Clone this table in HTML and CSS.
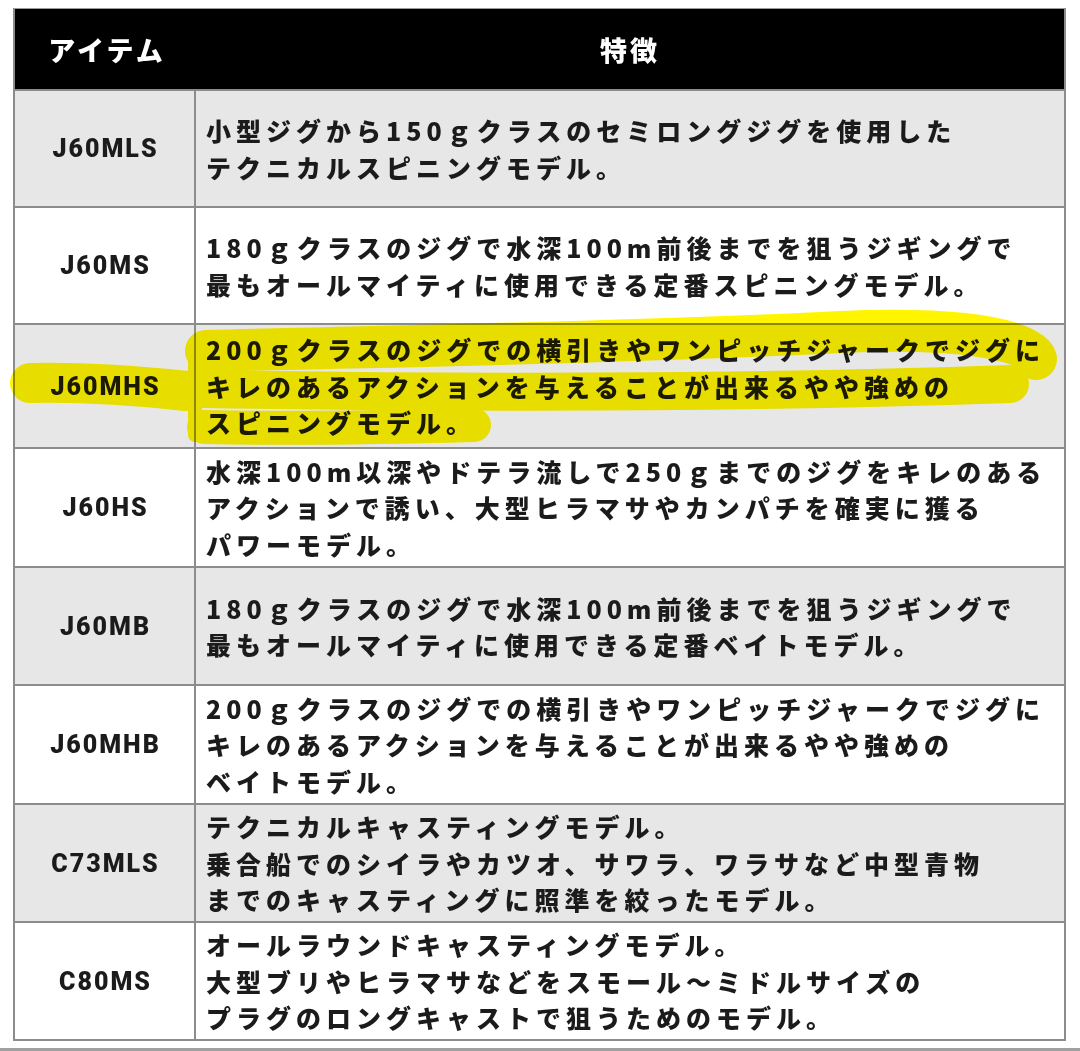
FILE: index.html
```html
<!DOCTYPE html>
<html lang="ja">
<head>
<meta charset="utf-8">
<title>アイテム 特徴</title>
<link rel="stylesheet" href="styles.css">
</head>
<body>
<div class="page">
  <div class="spec">
    <div class="head head-item">アイテム</div>
    <div class="head head-feat">特徴</div>

    <div class="cell name gray r1">J60MLS</div>
    <div class="cell desc gray r1">小型ジグから150ｇクラスのセミロングジグを使用した<br>テクニカルスピニングモデル。</div>

    <div class="cell name r2">J60MS</div>
    <div class="cell desc r2">180ｇクラスのジグで水深100m前後までを狙うジギングで<br>最もオールマイティに使用できる定番スピニングモデル。</div>

    <div class="cell name gray r3">J60MHS</div>
    <div class="cell desc gray r3">200ｇクラスのジグでの横引きやワンピッチジャークでジグに<br>キレのあるアクションを与えることが出来るやや強めの<br>スピニングモデル。</div>

    <div class="cell name r4">J60HS</div>
    <div class="cell desc r4">水深100m以深やドテラ流しで250ｇまでのジグをキレのある<br>アクションで誘い、大型ヒラマサやカンパチを確実に獲る<br>パワーモデル。</div>

    <div class="cell name gray r5">J60MB</div>
    <div class="cell desc gray r5">180ｇクラスのジグで水深100m前後までを狙うジギングで<br>最もオールマイティに使用できる定番ベイトモデル。</div>

    <div class="cell name r6">J60MHB</div>
    <div class="cell desc r6">200ｇクラスのジグでの横引きやワンピッチジャークでジグに<br>キレのあるアクションを与えることが出来るやや強めの<br>ベイトモデル。</div>

    <div class="cell name gray r7">C73MLS</div>
    <div class="cell desc gray r7">テクニカルキャスティングモデル。<br>乗合船でのシイラやカツオ、サワラ、ワラサなど中型青物<br>までのキャスティングに照準を絞ったモデル。</div>

    <div class="cell name r8">C80MS</div>
    <div class="cell desc r8">オールラウンドキャスティングモデル。<br>大型ブリやヒラマサなどをスモール～ミドルサイズの<br>プラグのロングキャストで狙うためのモデル。</div>
  </div>

  <svg class="marker" viewBox="0 0 1080 1051" width="1080" height="1051" aria-hidden="true">
    <g fill="none" stroke="#fff500" stroke-linecap="round" stroke-linejoin="round">
      <path d="M 30 383 C 80 382, 140 386, 186 391" stroke-width="40"/>
      <path d="M 206 351 C 400 346, 650 342, 840 332 C 960 327, 1030 339, 1036 359" stroke-width="42"/>
      <path d="M 204 389 C 450 393, 750 393, 1010 384" stroke-width="38"/>
      <path d="M 204 427 C 300 429, 400 427, 474 425" stroke-width="34"/>
      <path d="M 195 355 L 195 435" stroke-width="14"/>
    </g>
  </svg>
  <div class="bottom-rule"></div>
</div>
</body>
</html>
```

FILE: styles.css
```css
html, body {
  margin: 0;
  padding: 0;
  background: #ffffff;
}

body {
  font-family: "Noto Sans CJK JP", "Noto Sans", sans-serif;
  color: #1b1b1b;
}

.page {
  position: relative;
  width: 1080px;
  height: 1051px;
  overflow: hidden;
}

.spec {
  margin: 8px 0 0 13px;
  width: 1053px;
  display: grid;
  grid-template-columns: 181px 1fr;
  grid-template-rows: 80px 117px 117px 124px 119px 118px 119px 118px 118px;
  border: 2px solid #8c8c8c;
  border-top: 1px solid #9a9a9a;
  box-sizing: border-box;
}

.head {
  background: #000000;
  color: #ffffff;
  font-weight: 900;
  font-size: 27px;
  letter-spacing: 3px;
  display: flex;
  align-items: center;
  justify-content: center;
}

.head-item {
  padding-left: 3px;
}

.cell {
  border-top: 2px solid #8c8c8c;
  display: flex;
  align-items: center;
  background: #ffffff;
}

.cell.gray {
  background: #e7e7e7;
}

.name {
  justify-content: center;
  border-right: 2px solid #8c8c8c;
  font-family: Roboto, "Noto Sans", sans-serif;
  font-weight: 900;
  font-size: 25px;
  letter-spacing: 2px;
  padding-left: 2px;
}

.desc {
  padding-left: 10px;
  font-weight: 900;
  font-size: 25px;
  line-height: 36.4px;
  letter-spacing: 5px;
  white-space: nowrap;
}

.marker {
  position: absolute;
  left: 0;
  top: 0;
  mix-blend-mode: multiply;
  pointer-events: none;
}

.bottom-rule {
  position: absolute;
  left: 0;
  right: 0;
  bottom: 0;
  height: 3px;
  background: #a0a0a0;
}
```
